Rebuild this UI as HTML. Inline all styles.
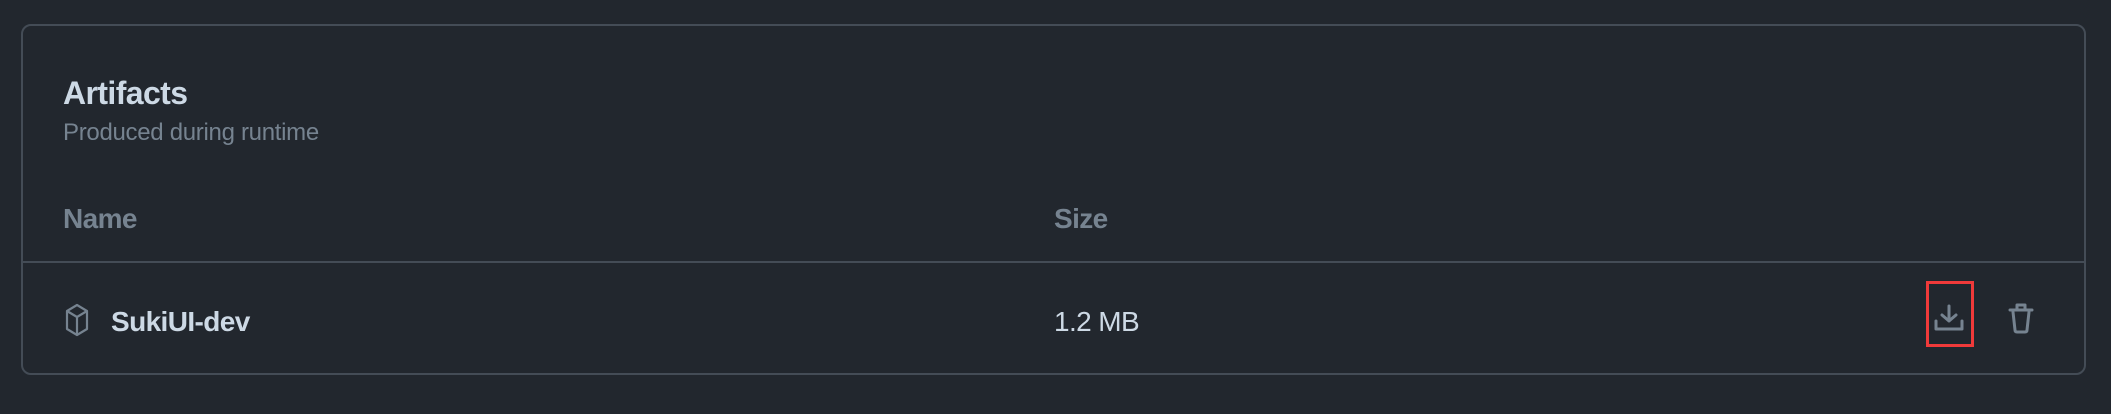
<!DOCTYPE html>
<html><head><meta charset="utf-8"><style>
html,body{margin:0;padding:0;background:#22272e;width:2111px;height:414px;overflow:hidden;font-family:"Liberation Sans",sans-serif;}
.card{position:absolute;left:21px;top:24px;width:2065px;height:351px;border:2px solid #444c56;border-radius:10px;box-sizing:border-box;}
.t{position:absolute;line-height:1;white-space:nowrap;}
.div{position:absolute;left:21px;width:2065px;top:261px;height:2px;background:#444c56;}
</style></head><body>
<div class="card"></div>
<div class="div"></div>
<div class="t" style="left:63px;top:77px;font-size:32px;font-weight:bold;color:#cdd9e5;letter-spacing:-0.6px;">Artifacts</div>
<div class="t" style="left:63px;top:121px;font-size:24px;color:#768390;letter-spacing:-0.3px;">Produced during runtime</div>
<div class="t" style="left:63px;top:205px;font-size:28px;font-weight:bold;color:#768390;letter-spacing:-0.6px;">Name</div>
<div class="t" style="left:1054px;top:205px;font-size:28px;font-weight:bold;color:#768390;letter-spacing:-0.6px;">Size</div>
<svg style="position:absolute;left:63px;top:303px" width="28" height="34" viewBox="0 0 24 34" fill="none" stroke="#768390" stroke-width="2.2" stroke-linejoin="round">
<path d="M12 2 L22 8 L22 26 L12 32 L2 26 L2 8 Z"/><path d="M2 8 L12 14 L22 8 M12 14 L12 32"/></svg>
<div class="t" style="left:111px;top:308px;font-size:28px;font-weight:bold;color:#cdd9e5;letter-spacing:-0.6px;">SukiUI-dev</div>
<div class="t" style="left:1054px;top:308px;font-size:28px;color:#cdd9e5;letter-spacing:-0.6px;">1.2 MB</div>
<div style="position:absolute;left:1926px;top:281px;width:48px;height:66px;border:3px solid #f03a3a;box-sizing:border-box;"></div>
<svg style="position:absolute;left:1934px;top:304px" width="30" height="28" viewBox="0 0 30 28" fill="none" stroke="#768390" stroke-width="3" stroke-linecap="round" stroke-linejoin="round">
<path d="M2 17 L2 25 L28 25 L28 17"/><path d="M15 2 L15 17 M8 11 L15 17 L22 11"/></svg>
<svg style="position:absolute;left:2008px;top:302px" width="26" height="32" viewBox="0 0 26 32" fill="none" stroke="#768390" stroke-width="3" stroke-linecap="round" stroke-linejoin="round">
<path d="M2 8 L24 8"/><path d="M9 7 L9 3 L17 3 L17 7"/><path d="M5 10 L7 28 Q7 30 9 30 L17 30 Q19 30 19 28 L21 10"/></svg>
</body></html>
